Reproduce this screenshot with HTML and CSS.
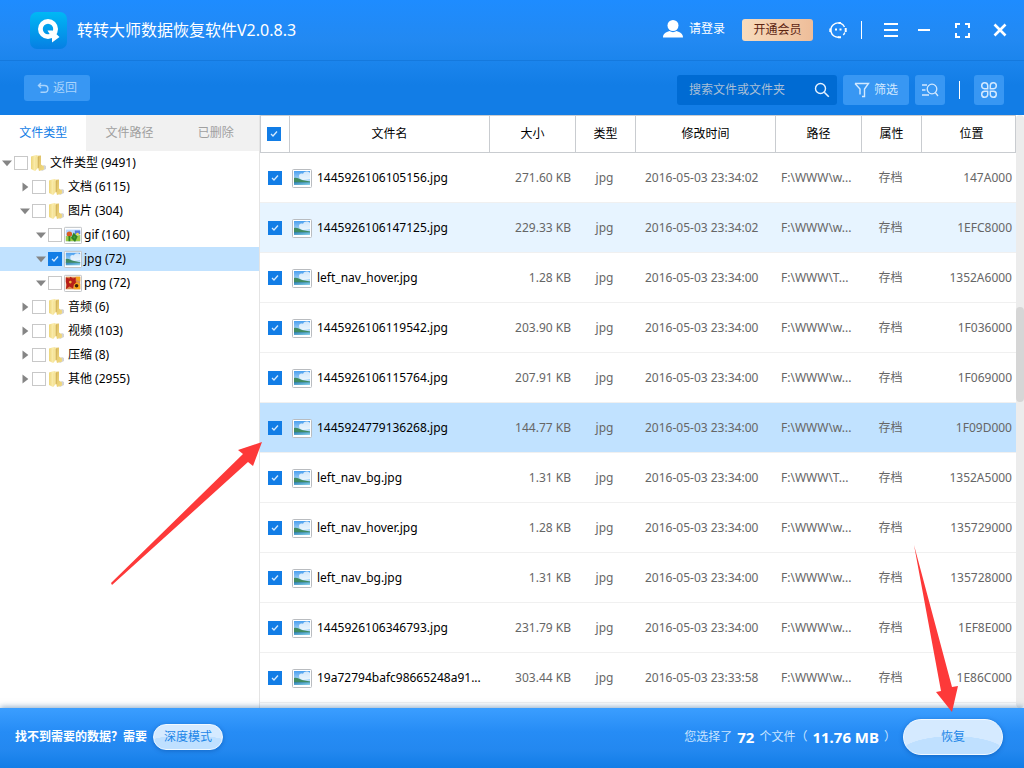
FILE: index.html
```html
<!DOCTYPE html>
<html lang="zh-CN">
<head>
    <meta charset="utf-8">
    <title>转转大师数据恢复软件</title>
    <link rel="stylesheet" href="styles.css">
</head>
<body>
    <svg class="defs" aria-hidden="true">
        <defs>
            <linearGradient id="logo-bg" x1="0" y1="0" x2="0" y2="1">
                <stop offset="0" stop-color="#00b8f5"/>
                <stop offset="1" stop-color="#067fe3"/>
            </linearGradient>
            <linearGradient id="fold-l" x1="0" y1="0" x2="1" y2="0">
                <stop offset="0" stop-color="#edd679"/>
                <stop offset="1" stop-color="#fff3bd"/>
            </linearGradient>
            <linearGradient id="fold-r" x1="0" y1="0" x2="1" y2="1">
                <stop offset="0" stop-color="#d9b95f"/>
                <stop offset="1" stop-color="#f3dc83"/>
            </linearGradient>
            <linearGradient id="sky" x1="0" y1="0" x2="0" y2="1">
                <stop offset="0" stop-color="#4a9fee"/>
                <stop offset="1" stop-color="#e2f6fd"/>
            </linearGradient>
            <linearGradient id="sea" x1="0" y1="0" x2="1" y2="1">
                <stop offset="0" stop-color="#2272ad"/>
                <stop offset="1" stop-color="#8ad6ec"/>
            </linearGradient>
        </defs>
        <symbol id="folder" viewBox="0 0 18 18">
            <path d="M9 14l5-3 2 1v3l-4 2z" fill="#d3d3d3"/>
            <path d="M5 2l6-.5v9l3 2v3l-5 1.500z" fill="url(#fold-r)"/>
            <path d="M1 2.500L6 1v14l-1 2-4-2z" fill="url(#fold-l)"/>
            <path d="M6 1l2 1v12l-3 3V4z" fill="#f6e59c"/>
            <path d="M8.200 3v11" stroke="#c7a64f" stroke-width=".7"/>
        </symbol>
        <symbol id="photo" viewBox="0 0 20 20">
            <rect x=".5" y="1.500" width="19" height="18" rx="1" fill="#fff" stroke="#b9bcc0"/>
            <rect x="2" y="3" width="16" height="14" fill="url(#sky)"/>
            <path d="M7 8c0-2 2-3 4-2 1-3 5-3 7-1v6l-7 1c-3-1-4-2-4-4z" fill="#fff" opacity=".75"/>
            <path d="M2 13.500h16V17H2z" fill="url(#sea)"/>
            <path d="M2 10c3-1 5 1 8 2l8 1.500v.8H2z" fill="#3f8b62"/>
        </symbol>
        <symbol id="gif" viewBox="0 0 20 20">
            <rect x=".5" y="1.500" width="19" height="18" rx="1" fill="#fff" stroke="#b9bcc0"/>
            <rect x="2" y="4" width="16" height="13" fill="#b8d8ff"/>
            <path d="M12 5h6v4h-6z" fill="#5778dc"/>
            <path d="M2 11l7 1 9-2v7H2z" fill="#9bcb45"/>
            <circle cx="6" cy="9" r="3" fill="#dc5d24"/>
            <path d="M6 11v6M11 9l3 3-2 4-3-3z" stroke="#2f8228" stroke-width="2" fill="#439f36"/>
            <circle cx="15" cy="9" r="1.500" fill="#f6dc42"/>
        </symbol>
        <symbol id="png" viewBox="0 0 20 20">
            <rect x=".5" y="1.500" width="19" height="18" rx="1" fill="#fff" stroke="#b9bcc0"/>
            <rect x="2" y="3" width="16" height="14" fill="#d98e54"/>
            <path d="M2 4l4 1 1-2 3 2 3-1v4l2 2-4 2-1 4-4-2-4 3 1-5-1-3z" fill="#b81f19"/>
            <circle cx="7" cy="9" r="1.500" fill="#f5b13c"/>
            <path d="M13 3h5v5l-4-1zM11 12l3-3 4 2v6h-7z" fill="#f7a51d"/>
            <circle cx="14" cy="13" r="2" fill="#42200c"/>
        </symbol>
        <symbol id="open" viewBox="0 0 12 12"><path d="M0 3h12L6 10z" fill="#858585"/></symbol>
        <symbol id="closed" viewBox="0 0 12 12"><path d="M3 .5v11L10 6z" fill="#858585"/></symbol>
        <symbol id="search" viewBox="0 0 16 16">
            <circle cx="6.500" cy="6.500" r="5" fill="none" stroke="currentColor" stroke-width="1.400"/>
            <path d="M10.200 10.200l4.600 4.600" stroke="currentColor" stroke-width="1.600"/>
        </symbol>
    </svg>

    <header class="header">
        <div class="titlebar">
            <svg class="logo" viewBox="0 0 37 37">
                <rect width="37" height="37" rx="7" fill="url(#logo-bg)"/>
                <circle cx="18" cy="17" r="7.600" fill="none" stroke="#fff" stroke-width="4.800"/>
                <path d="M17.500 18.500h5l7 6.500-7.500 5.500v-4.500z" fill="#fff"/>
            </svg>
            <h1 class="title">转转大师数据恢复软件V2.0.8.3</h1>
            <a class="login" href="#">
                <svg viewBox="0 0 20 18" width="20" height="18"><circle cx="10" cy="5.500" r="5.500" fill="#fff"/><path d="M0 17.500c0-4 3-5.500 6.500-6.500 2 1.500 5 1.500 7 0 3.500 1 6.500 2.500 6.500 6.500z" fill="#fff"/></svg>
                请登录
            </a>
            <button class="vip">开通会员</button>
            <button class="icon-btn service" aria-label="客服">
                <svg viewBox="0 0 18 18" width="18" height="18" fill="none" stroke="#fff" stroke-width="1.400">
                    <path d="M10 16.200A7.200 7.200 0 1 1 15.500 6M15.800 11.500a7 7 0 0 1-1.500 2.500"/>
                    <path d="M1.300 7.500v3.500M16.700 7v4" stroke-width="2"/>
                    <path d="M9 16.200h3M9.500 2h2.500" stroke-width="2"/>
                    <path d="M6 8.500h2M10.500 8.500h2" stroke-width="2"/>
                </svg>
            </button>
            <span class="divider"></span>
            <button class="icon-btn menu" aria-label="菜单"><svg viewBox="0 0 14 14" width="14" height="14"><path d="M0 1h14M0 7h14M0 13h14" stroke="#fff" stroke-width="2"/></svg></button>
            <button class="icon-btn minimize" aria-label="最小化"><svg viewBox="0 0 12 14" width="12" height="14"><path d="M0 7h12" stroke="#fff" stroke-width="2"/></svg></button>
            <button class="icon-btn maximize" aria-label="最大化"><svg viewBox="0 0 15 15" width="15" height="15"><path d="M1 5V1h4M10 1h4v4M14 10v4h-4M5 14H1v-4" fill="none" stroke="#fff" stroke-width="2"/></svg></button>
            <button class="icon-btn close" aria-label="关闭"><svg viewBox="0 0 14 14" width="14" height="14"><path d="M1.500 1.500l11 11M12.500 1.500l-11 11" stroke="#fff" stroke-width="2.600"/></svg></button>
        </div>
        <div class="toolbar">
            <button class="tool back">
                <svg viewBox="0 0 12 12" width="12" height="12" fill="none" stroke="currentColor" stroke-width="1.400"><path d="M2 3.500h5.500a3.300 3.300 0 0 1 0 6.800H3.500M4 1L1.500 3.500 4 6"/></svg>
                返回
            </button>
            <div class="search">
                <input type="text" placeholder="搜索文件或文件夹" aria-label="搜索文件或文件夹">
                <button class="search-btn" aria-label="搜索"><svg width="16" height="16"><use href="#search"/></svg></button>
            </div>
            <button class="tool filter">
                <svg viewBox="0 0 16 16" width="16" height="16" fill="none" stroke="currentColor" stroke-width="1.400"><path d="M1 1.500h13.500L10.500 7v7.500H8M1 1.500L6 7v5.500"/></svg>
                筛选
            </button>
            <button class="tool square" aria-label="高级搜索">
                <svg viewBox="0 0 18 16" width="18" height="16" fill="none" stroke="currentColor" stroke-width="1.300"><circle cx="11" cy="7" r="4.800"/><path d="M14.300 10.500l2.700 3.500M1 3h5M1 8h3.500M1 13h7"/></svg>
            </button>
            <span class="divider"></span>
            <button class="tool square more" aria-label="更多工具">
                <svg viewBox="0 0 18 18" width="18" height="18" fill="none" stroke="currentColor" stroke-width="1.500"><path d="M7.700 7.700H4.500a3 3 0 1 1 3.200-3.200zM10.300 7.700V4.500a3 3 0 1 1 3.200 3.200zM7.700 10.300v3.200a3 3 0 1 1-3.200-3.200zM10.300 10.300h3.200a3 3 0 1 1-3.200 3.200z"/></svg>
            </button>
        </div>
    </header>

    <main class="main">
        <aside class="sidebar">
            <div class="tabs">
                <button class="tab active">文件类型</button>
                <button class="tab">文件路径</button>
                <button class="tab">已删除</button>
            </div>
            <ul class="tree">
                <li><label class="node"><svg class="arrow"><use href="#open"/></svg><input type="checkbox"><svg class="type"><use href="#folder"/></svg>文件类型 (9491)</label></li>
                <li><label class="node level-1"><svg class="arrow"><use href="#closed"/></svg><input type="checkbox"><svg class="type"><use href="#folder"/></svg>文档 (6115)</label></li>
                <li><label class="node level-1"><svg class="arrow"><use href="#open"/></svg><input type="checkbox"><svg class="type"><use href="#folder"/></svg>图片 (304)</label></li>
                <li><label class="node level-2"><svg class="arrow"><use href="#open"/></svg><input type="checkbox"><svg class="type"><use href="#gif"/></svg>gif (160)</label></li>
                <li><label class="node level-2 selected"><svg class="arrow"><use href="#open"/></svg><input type="checkbox" checked><svg class="type"><use href="#photo"/></svg>jpg (72)</label></li>
                <li><label class="node level-2"><svg class="arrow"><use href="#open"/></svg><input type="checkbox"><svg class="type"><use href="#png"/></svg>png (72)</label></li>
                <li><label class="node level-1"><svg class="arrow"><use href="#closed"/></svg><input type="checkbox"><svg class="type"><use href="#folder"/></svg>音频 (6)</label></li>
                <li><label class="node level-1"><svg class="arrow"><use href="#closed"/></svg><input type="checkbox"><svg class="type"><use href="#folder"/></svg>视频 (103)</label></li>
                <li><label class="node level-1"><svg class="arrow"><use href="#closed"/></svg><input type="checkbox"><svg class="type"><use href="#folder"/></svg>压缩 (8)</label></li>
                <li><label class="node level-1"><svg class="arrow"><use href="#closed"/></svg><input type="checkbox"><svg class="type"><use href="#folder"/></svg>其他 (2955)</label></li>
            </ul>
        </aside>

        <section class="files">
            <table class="table">
                <colgroup>
                    <col class="col-check"><col><col class="col-size"><col class="col-type"><col class="col-time"><col class="col-path"><col class="col-attr"><col class="col-pos">
                </colgroup>
                <thead>
                    <tr><th><input type="checkbox" aria-label="全选" checked></th><th>文件名</th><th>大小</th><th>类型</th><th>修改时间</th><th>路径</th><th>属性</th><th>位置</th></tr>
                </thead>
                <tbody>
                    <tr><td><input type="checkbox" id="f1" checked></td><td class="name"><label for="f1"><svg><use href="#photo"/></svg><span>1445926106105156.jpg</span></label></td><td class="size">271.60 KB</td><td class="kind">jpg</td><td class="time">2016-05-03 23:34:02</td><td class="path">F:\WWW\w...</td><td class="attr">存档</td><td class="pos">147A000</td></tr>
                    <tr class="hover"><td><input type="checkbox" id="f2" checked></td><td class="name"><label for="f2"><svg><use href="#photo"/></svg><span>1445926106147125.jpg</span></label></td><td class="size">229.33 KB</td><td class="kind">jpg</td><td class="time">2016-05-03 23:34:02</td><td class="path">F:\WWW\w...</td><td class="attr">存档</td><td class="pos">1EFC8000</td></tr>
                    <tr><td><input type="checkbox" id="f3" checked></td><td class="name"><label for="f3"><svg><use href="#photo"/></svg><span>left_nav_hover.jpg</span></label></td><td class="size">1.28 KB</td><td class="kind">jpg</td><td class="time">2016-05-03 23:34:00</td><td class="path">F:\WWW\T...</td><td class="attr">存档</td><td class="pos">1352A6000</td></tr>
                    <tr><td><input type="checkbox" id="f4" checked></td><td class="name"><label for="f4"><svg><use href="#photo"/></svg><span>1445926106119542.jpg</span></label></td><td class="size">203.90 KB</td><td class="kind">jpg</td><td class="time">2016-05-03 23:34:00</td><td class="path">F:\WWW\w...</td><td class="attr">存档</td><td class="pos">1F036000</td></tr>
                    <tr><td><input type="checkbox" id="f5" checked></td><td class="name"><label for="f5"><svg><use href="#photo"/></svg><span>1445926106115764.jpg</span></label></td><td class="size">207.91 KB</td><td class="kind">jpg</td><td class="time">2016-05-03 23:34:00</td><td class="path">F:\WWW\w...</td><td class="attr">存档</td><td class="pos">1F069000</td></tr>
                    <tr class="selected"><td><input type="checkbox" id="f6" checked></td><td class="name"><label for="f6"><svg><use href="#photo"/></svg><span>1445924779136268.jpg</span></label></td><td class="size">144.77 KB</td><td class="kind">jpg</td><td class="time">2016-05-03 23:34:00</td><td class="path">F:\WWW\w...</td><td class="attr">存档</td><td class="pos">1F09D000</td></tr>
                    <tr><td><input type="checkbox" id="f7" checked></td><td class="name"><label for="f7"><svg><use href="#photo"/></svg><span>left_nav_bg.jpg</span></label></td><td class="size">1.31 KB</td><td class="kind">jpg</td><td class="time">2016-05-03 23:34:00</td><td class="path">F:\WWW\T...</td><td class="attr">存档</td><td class="pos">1352A5000</td></tr>
                    <tr><td><input type="checkbox" id="f8" checked></td><td class="name"><label for="f8"><svg><use href="#photo"/></svg><span>left_nav_hover.jpg</span></label></td><td class="size">1.28 KB</td><td class="kind">jpg</td><td class="time">2016-05-03 23:34:00</td><td class="path">F:\WWW\w...</td><td class="attr">存档</td><td class="pos">135729000</td></tr>
                    <tr><td><input type="checkbox" id="f9" checked></td><td class="name"><label for="f9"><svg><use href="#photo"/></svg><span>left_nav_bg.jpg</span></label></td><td class="size">1.31 KB</td><td class="kind">jpg</td><td class="time">2016-05-03 23:34:00</td><td class="path">F:\WWW\w...</td><td class="attr">存档</td><td class="pos">135728000</td></tr>
                    <tr><td><input type="checkbox" id="f10" checked></td><td class="name"><label for="f10"><svg><use href="#photo"/></svg><span>1445926106346793.jpg</span></label></td><td class="size">231.79 KB</td><td class="kind">jpg</td><td class="time">2016-05-03 23:34:00</td><td class="path">F:\WWW\w...</td><td class="attr">存档</td><td class="pos">1EF8E000</td></tr>
                    <tr><td><input type="checkbox" id="f11" checked></td><td class="name"><label for="f11"><svg><use href="#photo"/></svg><span>19a72794bafc98665248a91...</span></label></td><td class="size">303.44 KB</td><td class="kind">jpg</td><td class="time">2016-05-03 23:33:58</td><td class="path">F:\WWW\w...</td><td class="attr">存档</td><td class="pos">1E86C000</td></tr>
                </tbody>
            </table>
            <div class="scrollbar"><div class="thumb"></div></div>
        </section>
    </main>

    <footer class="footer">
        <span class="tip">找不到需要的数据？需要</span>
        <button class="pill deep">深度模式</button>
        <p class="summary"><span>您选择了</span><strong>72</strong><span>个文件（</span><strong>11.76 MB</strong><span>）</span></p>
        <button class="pill recover">恢复</button>
    </footer>

    <svg class="pointer pointer-row" viewBox="0 0 152 144"><path d="M1 142l1 2L138 21l5 4 9-24-24 8 5 4z"/></svg>
    <svg class="pointer pointer-recover" viewBox="0 0 46 168"><path d="M1 1l27 146-5 1 16 20 6-26-6 1z"/></svg>
</body>
</html>
```

FILE: styles.css
```css
* {
    box-sizing: border-box;
}

body {
    margin: 0;
    height: 100vh;
    display: flex;
    flex-direction: column;
    position: relative;
    overflow: hidden;
    font-family: "Noto Sans", "Noto Sans CJK SC", sans-serif;
    font-size: 12px;
    line-height: 18px;
    color: #000;
    background: #fff;
}

button,
input {
    font: inherit;
    border: 0;
    padding: 0;
    margin: 0;
}

button {
    cursor: pointer;
    background: none;
    display: flex;
    align-items: center;
    justify-content: center;
    white-space: nowrap;
}

svg {
    display: block;
    flex: none;
}

.defs {
    position: absolute;
    width: 0;
    height: 0;
}

/* header */
.header {
    flex: none;
    background: linear-gradient(#1e8cff, #2289f2 40px, #1a84ec 64px, #127de6 85px);
}

.titlebar {
    height: 61px;
    display: flex;
    align-items: center;
    padding: 0 17px 0 30px;
    border-bottom: 1px solid #1579dd;
    color: #fff;
}

.logo {
    width: 37px;
    height: 37px;
    margin-right: 10px;
}

.title {
    flex: 1;
    margin: 0;
    font-size: 16px;
    font-weight: 400;
    line-height: 24px;
    white-space: nowrap;
}

.login {
    display: flex;
    align-items: center;
    gap: 6px;
    margin-right: 17px;
    padding-bottom: 3px;
    color: #fff;
    text-decoration: none;
}

.vip {
    width: 71px;
    height: 22px;
    border-radius: 3px;
    margin-right: 16px;
    color: #5c2412;
    background: linear-gradient(90deg, #f8dcbd, #eebd99);
}

.divider {
    width: 1px;
    height: 18px;
    background: #fff;
}

.service {
    margin-right: 14px;
}

.menu {
    margin: 0 20px 0 22px;
}

.minimize {
    margin-right: 25px;
}

.maximize {
    margin-right: 23px;
}

.toolbar {
    height: 54px;
    display: flex;
    align-items: flex-start;
    padding: 14px 20px 0 24px;
}

.toolbar .divider {
    margin: 6px 14px 0;
}

.tool {
    height: 30px;
    gap: 4px;
    border-radius: 3px;
    color: #d3e9ff;
    background: #3897f3;
}

.back {
    width: 66px;
    height: 26px;
    color: #a9d4fc;
    margin-right: auto;
}

.search {
    width: 160px;
    height: 30px;
    display: flex;
    align-items: center;
    padding: 0 7px 0 12px;
    margin-right: 6px;
    border-radius: 3px;
    background: #006bd3;
}

.search input {
    flex: 1;
    min-width: 0;
    outline: none;
    color: #fff;
    background: none;
}

.search input::placeholder {
    color: #a9bfd6;
    opacity: 1;
}

.search-btn {
    color: #e6f2ff;
}

.filter {
    width: 66px;
    margin-right: 6px;
}

.square {
    width: 30px;
}

/* checkboxes */
input[type="checkbox"] {
    appearance: none;
    flex: none;
    display: block;
    width: 14px;
    height: 14px;
    border: 1px solid #c8c8c8;
    background: #fff;
}

input[type="checkbox"]:checked {
    border-color: #127de6;
    background: #127de6 url("data:image/svg+xml,%3Csvg xmlns='http://www.w3.org/2000/svg' viewBox='0 0 12 12'%3E%3Cpath d='M3 6l2 2 4-4.500' fill='none' stroke='%23d5eaff' stroke-width='1.300'/%3E%3C/svg%3E");
}

/* main */
.main {
    flex: 1;
    min-height: 0;
    display: flex;
    overflow: hidden;
}

.sidebar {
    flex: none;
    width: 260px;
    border-right: 1px solid #e4e4e4;
}

.tabs {
    display: flex;
    height: 36px;
}

.tab {
    flex: 1;
    color: #a0a0a0;
    background: #f1f1f1;
}

.tab.active {
    color: #127de6;
    background: #fff;
}

.tree {
    list-style: none;
    margin: 0;
    padding: 0;
}

.node {
    display: flex;
    align-items: center;
    gap: 2px;
    height: 24px;
    padding-left: 2px;
    white-space: nowrap;
}

.node.level-1 {
    padding-left: 20px;
}

.node.level-2 {
    padding-left: 36px;
}

.node.selected {
    background: #c1e2ff;
}

.arrow {
    width: 10px;
    height: 10px;
}

.type {
    width: 18px;
    height: 18px;
}

/* file table */
.files {
    flex: 1;
    min-width: 0;
    display: flex;
    align-items: stretch;
}

.table {
    flex: 1;
    align-self: flex-start;
    min-width: 0;
    table-layout: fixed;
    border-collapse: separate;
    border-spacing: 0;
}

.col-check { width: 30px; }
.col-size { width: 86px; }
.col-type { width: 60px; }
.col-time { width: 140px; }
.col-path { width: 86px; }
.col-attr { width: 60px; }
.col-pos { width: 94px; }

th {
    height: 38px;
    padding: 0;
    font-weight: 400;
    border: 1px solid #c9ccd0;
    border-left: 0;
}

th:first-child {
    border-left: 1px solid #c9ccd0;
    padding-left: 6px;
}

th:last-child {
    padding-left: 6px;
}

td {
    height: 50px;
    padding: 0;
    color: #666;
    border-bottom: 1px solid #f0f0f0;
    white-space: nowrap;
    overflow: hidden;
}

td:first-child {
    padding-left: 8px;
}

tr.hover td {
    background: #e7f4ff;
}

tr.selected td {
    background: #c1e2ff;
}

.name label {
    display: flex;
    align-items: center;
    gap: 5px;
    padding-left: 2px;
    color: #000;
}

.name svg {
    width: 20px;
    height: 20px;
}

.size {
    text-align: right;
    padding-right: 5px;
}

.kind,
.attr {
    text-align: center;
    padding-right: 3px;
}

.time {
    padding-left: 9px;
}

.path {
    padding-left: 5px;
}

.pos {
    text-align: right;
    padding-right: 4px;
}

.scrollbar {
    flex: none;
    width: 8px;
    padding-top: 192px;
    border-radius: 4px;
    background: #ececec;
}

.thumb {
    height: 95px;
    border-radius: 4px;
    background: #d6d6d6;
}

/* footer */
.footer {
    flex: none;
    height: 60px;
    display: flex;
    align-items: center;
    padding: 0 21px 2px 15px;
    color: #fff;
    background: linear-gradient(#3b9eff, #268cf5 24px, #2388f0 42px, #127de6);
    box-shadow: 0 -1px 6px rgba(20, 80, 140, 0.5);
    position: relative;
}

.tip {
    font-weight: 700;
    margin-right: 6px;
}

.pill {
    color: #2186e8;
    border: 1px solid #f2f9ff;
    box-shadow: 0 1px 4px rgba(0, 60, 140, 0.4);
}

.deep {
    width: 70px;
    height: 26px;
    border-radius: 13px;
    background: radial-gradient(ellipse 50px 14px at 50% 100%, #bfe0ff 98%, #d5eaff);
}

.recover {
    width: 100px;
    height: 36px;
    border-radius: 18px;
    background: radial-gradient(ellipse 54px 18px at 50% 100%, #bfe0ff 98%, #d5eaff);
}

.summary {
    display: flex;
    align-items: center;
    gap: 5px;
    margin: 0 7px 0 auto;
    color: #c9e4ff;
}

.summary strong {
    font-size: 15px;
    color: #fff;
}

/* red pointers */
.pointer {
    position: absolute;
    fill: #fd3939;
    pointer-events: none;
}

.pointer-row {
    top: 441px;
    left: 110px;
    width: 152px;
    height: 144px;
}

.pointer-recover {
    right: 65px;
    bottom: 56px;
    width: 46px;
    height: 168px;
}
```
